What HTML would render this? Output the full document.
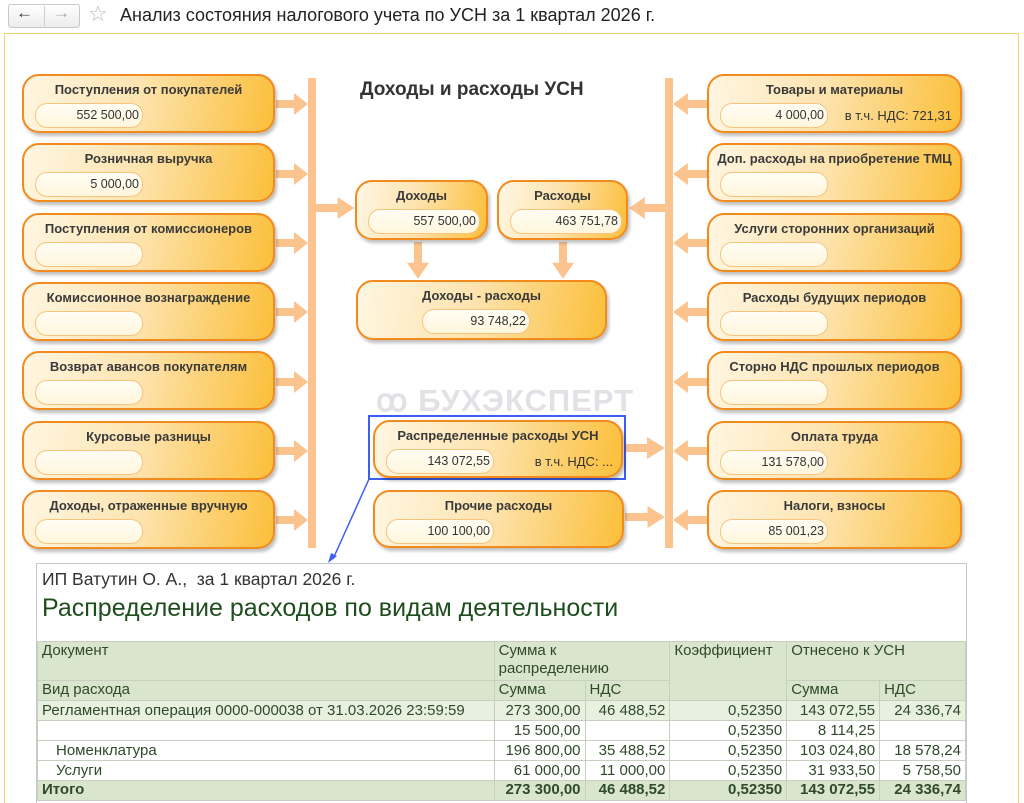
<!DOCTYPE html>
<html><head><meta charset="utf-8"><style>
*{margin:0;padding:0;box-sizing:border-box}
body{width:1024px;height:803px;background:#fff;font-family:"Liberation Sans",sans-serif;position:relative;overflow:hidden;color:#333}
.abs{position:absolute}
.frame{position:absolute;left:4px;top:33px;width:1015px;height:770px;border:1px solid #f5d36a;border-bottom:none}
.b{position:absolute;border:2px solid #f28a1e;border-radius:17px;background:linear-gradient(100deg,#fff6e2 0%,#fde4b0 45%,#fbbf3a 100%);box-shadow:2px 3px 3px rgba(0,0,0,.25)}
.b .t{position:absolute;left:0;right:0;top:6px;text-align:center;font-weight:bold;font-size:13px;color:#3a3a3a;white-space:nowrap}
.b .f{position:absolute;left:11px;top:27px;width:108px;height:25px;border-radius:12px;background:linear-gradient(#fffdf4,#fff6dc);border:1px solid #f7c47e;text-align:right;font-size:12.5px;line-height:23px;padding-right:3px;color:#333}
.b .n{position:absolute;right:8px;top:32px;font-size:13px;color:#333}
table{border-collapse:collapse;font-size:15px;color:#2f4a2a}
td{border:1px solid #c7cfc1;padding:0 4px;height:20px;line-height:18px;white-space:nowrap}
.h td{background:#d9e5cc;vertical-align:top}
.r{text-align:right}
</style></head><body>
<div class="abs" style="left:8px;top:4px;width:72px;height:24px;border:1px solid #c8c8c8;border-radius:3px;background:linear-gradient(#fff,#ececec)"></div>
<div class="abs" style="left:44px;top:6px;width:1px;height:20px;background:#ccc"></div>
<div class="abs" style="left:16px;top:3px;font-size:17px;color:#333">&#8592;</div>
<div class="abs" style="left:53px;top:3px;font-size:17px;color:#aaa">&#8594;</div>
<div class="abs" style="left:88px;top:1px;font-size:22px;color:#bbb">&#9734;</div>
<div class="abs" style="left:120px;top:5px;font-size:18px;color:#222">Анализ состояния налогового учета по УСН за 1 квартал 2026 г.</div>
<div class="frame"></div>

<svg class="abs" style="left:0;top:0" width="1024" height="803">
<g fill="#fbc48e">
<rect x="308" y="78" width="8" height="470"/>
<rect x="665" y="78" width="8" height="470"/>
</g>
<g fill="#fbc48e">
<path d="M0 -4 H18 V-11 L32 0 L18 11 V4 H0 Z" transform="translate(276,104)"/>
<path d="M0 -4 H18 V-11 L32 0 L18 11 V4 H0 Z" transform="translate(276,174)"/>
<path d="M0 -4 H18 V-11 L32 0 L18 11 V4 H0 Z" transform="translate(276,243)"/>
<path d="M0 -4 H18 V-11 L32 0 L18 11 V4 H0 Z" transform="translate(276,312)"/>
<path d="M0 -4 H18 V-11 L32 0 L18 11 V4 H0 Z" transform="translate(276,382)"/>
<path d="M0 -4 H18 V-11 L32 0 L18 11 V4 H0 Z" transform="translate(276,451)"/>
<path d="M0 -4 H18 V-11 L32 0 L18 11 V4 H0 Z" transform="translate(276,520)"/>
<path d="M0 -4 H18 V-11 L32 0 L18 11 V4 H0 Z" transform="translate(316,208) scale(1.2,1)"/>
<path d="M0 -4 H18 V-11 L32 0 L18 11 V4 H0 Z" transform="translate(624,448) scale(1.28,1)"/>
<path d="M0 -4 H18 V-11 L32 0 L18 11 V4 H0 Z" transform="translate(625,517) scale(1.25,1)"/>
<path d="M0 -4 H18 V-11 L32 0 L18 11 V4 H0 Z" transform="translate(707,104) scale(-1.06,1)"/>
<path d="M0 -4 H18 V-11 L32 0 L18 11 V4 H0 Z" transform="translate(707,174) scale(-1.06,1)"/>
<path d="M0 -4 H18 V-11 L32 0 L18 11 V4 H0 Z" transform="translate(707,243) scale(-1.06,1)"/>
<path d="M0 -4 H18 V-11 L32 0 L18 11 V4 H0 Z" transform="translate(707,312) scale(-1.06,1)"/>
<path d="M0 -4 H18 V-11 L32 0 L18 11 V4 H0 Z" transform="translate(707,382) scale(-1.06,1)"/>
<path d="M0 -4 H18 V-11 L32 0 L18 11 V4 H0 Z" transform="translate(707,451) scale(-1.06,1)"/>
<path d="M0 -4 H18 V-11 L32 0 L18 11 V4 H0 Z" transform="translate(707,520) scale(-1.06,1)"/>
<path d="M0 -4 H18 V-11 L32 0 L18 11 V4 H0 Z" transform="translate(665,208) scale(-1.12,1)"/>
<path d="M0 -4 H18 V-11 L32 0 L18 11 V4 H0 Z" transform="translate(418,242) rotate(90) scale(1.15,1)"/>
<path d="M0 -4 H18 V-11 L32 0 L18 11 V4 H0 Z" transform="translate(563,242) rotate(90) scale(1.15,1)"/>
</g>
<text x="376" y="411" font-family="Liberation Sans" font-weight="bold" font-size="31" fill="#e2e2e6" letter-spacing="1">ꝏ БУХЭКСПЕРТ</text>
<rect x="369" y="416" width="256" height="63" fill="none" stroke="#3d5fef" stroke-width="2"/>
<line x1="369" y1="479" x2="333" y2="559" stroke="#3d5fef" stroke-width="1.5"/>
<path d="M328 563 L331 553 L337 556 Z" fill="#3d5fef"/>
</svg>

<div class="abs" style="left:360px;top:79px;font-size:19px;font-weight:bold;color:#333">Доходы и расходы УСН</div>

<div class="b" style="left:22px;top:74px;width:253px;height:59px"><div class="t">Поступления от покупателей</div><div class="f">552 500,00</div></div>
<div class="b" style="left:22px;top:143px;width:253px;height:59px"><div class="t">Розничная выручка</div><div class="f">5 000,00</div></div>
<div class="b" style="left:22px;top:213px;width:253px;height:59px"><div class="t">Поступления от комиссионеров</div><div class="f"></div></div>
<div class="b" style="left:22px;top:282px;width:253px;height:59px"><div class="t">Комиссионное вознаграждение</div><div class="f"></div></div>
<div class="b" style="left:22px;top:351px;width:253px;height:59px"><div class="t">Возврат авансов покупателям</div><div class="f"></div></div>
<div class="b" style="left:22px;top:421px;width:253px;height:59px"><div class="t">Курсовые разницы</div><div class="f"></div></div>
<div class="b" style="left:22px;top:490px;width:253px;height:59px"><div class="t">Доходы, отраженные вручную</div><div class="f"></div></div>

<div class="b" style="left:707px;top:74px;width:255px;height:59px"><div class="t">Товары и материалы</div><div class="f">4 000,00</div><div class="n">в т.ч. НДС: 721,31</div></div>
<div class="b" style="left:707px;top:143px;width:255px;height:59px"><div class="t">Доп. расходы на приобретение ТМЦ</div><div class="f"></div></div>
<div class="b" style="left:707px;top:213px;width:255px;height:59px"><div class="t">Услуги сторонних организаций</div><div class="f"></div></div>
<div class="b" style="left:707px;top:282px;width:255px;height:59px"><div class="t">Расходы будущих периодов</div><div class="f"></div></div>
<div class="b" style="left:707px;top:351px;width:255px;height:59px"><div class="t">Сторно НДС прошлых периодов</div><div class="f"></div></div>
<div class="b" style="left:707px;top:421px;width:255px;height:59px"><div class="t">Оплата труда</div><div class="f">131 578,00</div></div>
<div class="b" style="left:707px;top:490px;width:255px;height:59px"><div class="t">Налоги, взносы</div><div class="f">85 001,23</div></div>

<div class="b" style="left:355px;top:180px;width:133px;height:60px"><div class="t">Доходы</div><div class="f" style="width:112px">557 500,00</div></div>
<div class="b" style="left:497px;top:180px;width:131px;height:60px"><div class="t">Расходы</div><div class="f" style="width:112px">463 751,78</div></div>
<div class="b" style="left:356px;top:280px;width:251px;height:60px"><div class="t">Доходы - расходы</div><div class="f" style="left:64px">93 748,22</div></div>
<div class="b" style="left:373px;top:420px;width:250px;height:58px"><div class="t">Распределенные расходы УСН</div><div class="f">143 072,55</div><div class="n">в т.ч. НДС: ...</div></div>
<div class="b" style="left:373px;top:490px;width:251px;height:58px"><div class="t">Прочие расходы</div><div class="f">100 100,00</div></div>

<div class="abs" style="left:36px;top:563px;width:931px;height:240px;background:#fff;border:1px solid #c8c8c8;border-bottom:none"></div>
<div class="abs" style="left:42px;top:569px;font-size:17.5px;color:#333">ИП Ватутин О. А.,&nbsp; за 1 квартал 2026 г.</div>
<div class="abs" style="left:42px;top:594px;font-size:25px;color:#1e4d1e">Распределение расходов по видам деятельности</div>
<table class="abs" style="left:37px;top:641px;width:929px">
<colgroup><col style="width:457px"><col style="width:91px"><col style="width:85px"><col style="width:117px"><col style="width:93px"><col style="width:86px"></colgroup>
<tr class="h"><td style="height:39px">Документ</td><td colspan="2">Сумма к<br>распределению</td><td rowspan="2">Коэффициент</td><td colspan="2">Отнесено к УСН</td></tr>
<tr class="h"><td>Вид расхода</td><td>Сумма</td><td>НДС</td><td>Сумма</td><td>НДС</td></tr>
<tr style="background:#e8f0df"><td>Регламентная операция 0000-000038 от 31.03.2026 23:59:59</td><td class="r">273 300,00</td><td class="r">46 488,52</td><td class="r">0,52350</td><td class="r">143 072,55</td><td class="r">24 336,74</td></tr>
<tr><td></td><td class="r">15 500,00</td><td></td><td class="r">0,52350</td><td class="r">8 114,25</td><td></td></tr>
<tr><td style="padding-left:18px">Номенклатура</td><td class="r">196 800,00</td><td class="r">35 488,52</td><td class="r">0,52350</td><td class="r">103 024,80</td><td class="r">18 578,24</td></tr>
<tr><td style="padding-left:18px">Услуги</td><td class="r">61 000,00</td><td class="r">11 000,00</td><td class="r">0,52350</td><td class="r">31 933,50</td><td class="r">5 758,50</td></tr>
<tr class="h" style="font-weight:bold"><td>Итого</td><td class="r">273 300,00</td><td class="r">46 488,52</td><td class="r">0,52350</td><td class="r">143 072,55</td><td class="r">24 336,74</td></tr>
</table>
</body></html>
